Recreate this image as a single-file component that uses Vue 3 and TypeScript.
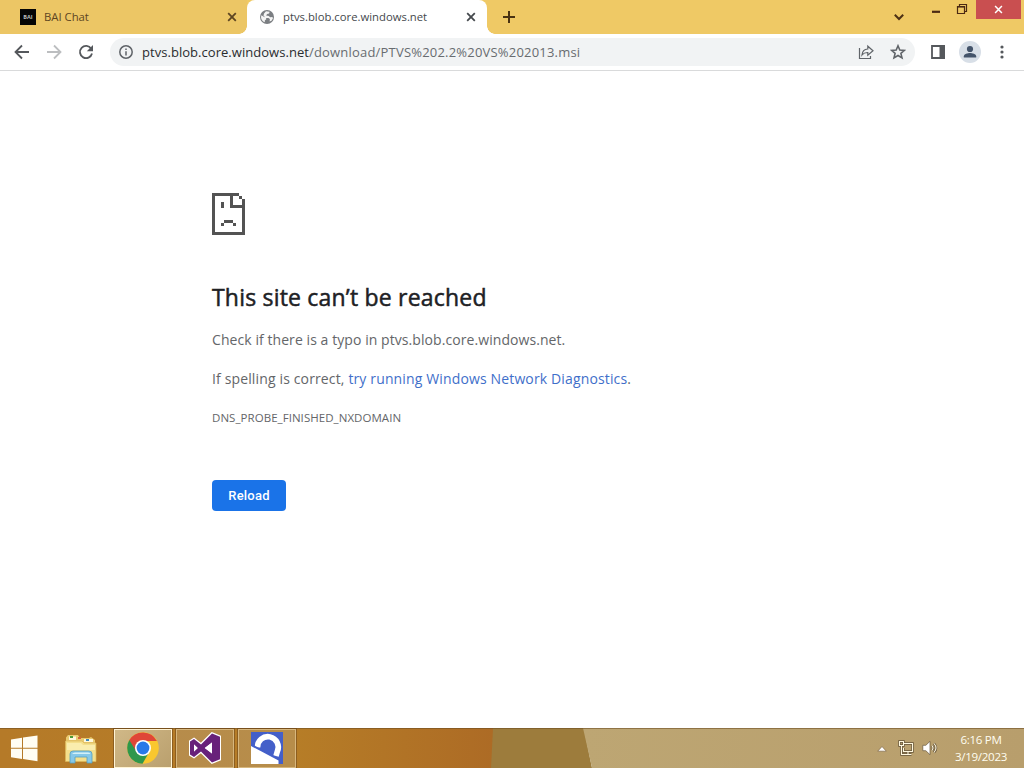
<template>
  <div class="desktop">
    <header class="tab-strip">
      <div class="tabs">
        <div
          v-for="tab in tabs"
          :key="tab.title"
          class="tab"
          :class="{ active: tab.active }"
        >
          <span v-if="!tab.active" class="bai-icon">BAI</span>
          <svg v-else class="globe" viewBox="0 0 16 16">
            <circle cx="8" cy="8" r="7" fill="#7b7e82" />
            <path d="M2.4 6.2 5.2 8l1.8.5.3 1.8-1.5 1.2v1.8C3.5 12.5 2 10.4 2 8zM7 2.3l3.6.5-.5 1.7-2 .4-1 1.7 2.6.3 1.5 1.3 2.3-.3.4 1.5-1.4 2.4-1.9.7.3-2.4-1.5-1-2.6-.3-2.3-2L5 4.5z" fill="#f4f4f4" />
          </svg>
          <span class="tab-title">{{ tab.title }}</span>
          <svg class="tab-close" viewBox="0 0 10 10">
            <path d="M1.2 1.2l7.6 7.6M8.8 1.2l-7.6 7.6" />
          </svg>
        </div>
      </div>
      <svg class="new-tab" viewBox="0 0 12 12"><path d="M6 0v12M0 6h12" /></svg>
      <svg class="tab-search" viewBox="0 0 10 8"><path d="M.8 1.8 5 6l4.2-4.2" /></svg>
      <div class="window-controls">
        <svg class="minimize" viewBox="0 0 10 12"><path d="M1 10.8h8" stroke-width="2.2" /></svg>
        <svg class="restore" viewBox="0 0 12 12">
          <path d="M3.5 3V1.5h7v7H9" />
          <path d="M1.5 3.5h7v7h-7z" /><path d="M1 4h8" />
        </svg>
        <div class="close-window">
          <svg viewBox="0 0 10 10"><path d="M1.2 1.2l7.6 7.6M8.8 1.2l-7.6 7.6" /></svg>
        </div>
      </div>
    </header>

    <nav class="toolbar">
      <svg class="nav-icon" viewBox="0 0 16 16"><path d="M15 8H2M8 1.5 1.5 8 8 14.5" /></svg>
      <svg class="nav-icon disabled" viewBox="0 0 16 16"><path d="M1 8h13M8 1.5 14.5 8 8 14.5" /></svg>
      <svg class="nav-icon" viewBox="0 0 16 16">
        <path d="M13.2 4.7A6.1 6.1 0 1 0 14 9.5" />
        <path d="M15 1v6.2H8.8z" class="solid" />
      </svg>
      <div class="omnibox">
        <svg class="info" viewBox="0 0 14 14">
          <circle cx="7" cy="7" r="6.2" /><path d="M7 6.2v4.3M7 3.4v1.6" />
        </svg>
        <span class="url"><b>ptvs.blob.core.windows.net</b>/download/PTVS%202.2%20VS%202013.msi</span>
        <svg class="share" viewBox="0 0 16 16">
          <path d="M1.5 4v10.5h11V12" />
          <path d="M4 11C4.3 7 6.5 5.2 9.8 5V2.2L15 6.8l-5.2 4.5V8.5C7.2 8.4 5.4 9.2 4 11z" />
        </svg>
        <svg class="star" viewBox="0 0 16 16">
          <path d="M8 1.8l1.8 4.2 4.6.4-3.5 3 1.1 4.5L8 11.5l-4 2.4 1.1-4.5-3.5-3L6.2 6z" />
        </svg>
      </div>
      <svg class="side-panel" viewBox="0 0 14 14">
        <path d="M1 1h12v12H1z" /><path d="M8.5 0H14v14H8.5z" class="solid" />
      </svg>
      <svg class="avatar" viewBox="0 0 22 22">
        <circle cx="11" cy="11" r="11" fill="#d8dfe7" />
        <circle cx="11" cy="8" r="3.1" fill="#44546a" />
        <path d="M4.8 16.5v-1.2c0-2.3 4-3.2 6.2-3.2s6.2.9 6.2 3.2v1.2z" fill="#44546a" />
      </svg>
      <svg class="menu" viewBox="0 0 4 14">
        <circle cx="2" cy="2" r="1.6" /><circle cx="2" cy="7" r="1.6" /><circle cx="2" cy="12" r="1.6" />
      </svg>
    </nav>

    <main class="page">
      <svg class="sad-page" viewBox="0 0 11 14" shape-rendering="crispEdges">
        <path d="M0 0h9v1h1v1h1v12H0zM1 1v12h9V5H6V1zM7 1v3h3V2H9V1z" fill-rule="evenodd" />
        <path d="M3 3h1v2H3zM4 9h3v1H4zM3 10h1v1H3zM7 10h1v1H7z" />
      </svg>
      <h1>This site can’t be reached</h1>
      <p class="check">Check if there is a typo in ptvs.blob.core.windows.net.</p>
      <p class="spelling">If spelling is correct, <a>try running Windows Network Diagnostics</a>.</p>
      <div class="error-code">DNS_PROBE_FINISHED_NXDOMAIN</div>
      <button class="reload">Reload</button>
    </main>

    <footer class="taskbar">
      <svg class="wallpaper" viewBox="0 0 1024 40" preserveAspectRatio="none">
        <defs>
          <linearGradient id="wood">
            <stop offset="0" stop-color="#b57a28" />
            <stop offset=".6" stop-color="#b67d27" />
            <stop offset="1" stop-color="#ad6b25" />
          </linearGradient>
          <linearGradient id="sand">
            <stop offset="0" stop-color="#bda673" />
            <stop offset="1" stop-color="#b89e6c" />
          </linearGradient>
        </defs>
        <rect width="493" height="40" fill="url(#wood)" />
        <path d="M493 0h91l8 40H491z" fill="#9d7c3c" />
        <path d="M583 0h441v40H592z" fill="url(#sand)" />
        <path d="M0 .5h1024" stroke="#694b20" stroke-opacity=".55" />
      </svg>

      <div class="start">
        <svg viewBox="0 0 28 27">
          <path d="M1 4.5 12 2.8v10H1zM13 2.6 27.5.5v12.3H13zM1 13.8h11v10.1L1 22.3zM13 13.8h14.5v12.5L13 24.1z" />
        </svg>
      </div>

      <div class="task explorer">
        <svg viewBox="0 0 34 32">
          <path d="M2 3.5 4 1h10l2 3h9l2-1 4 3v20H2z" fill="#e9ca70" />
          <path d="M5 2.5h7V6H5zM20 5h9v3h-9z" fill="#fff8dc" />
          <path d="M6 2h3v2H6z" fill="#4c9b39" /><path d="M14 3h3v2h-3z" fill="#d5643c" />
          <path d="M22 5h3v2h-3z" fill="#4189bc" />
          <path d="M1.5 7H18l2 2h12v18.5H1.5z" fill="#f4df8c" stroke="#dcb75a" stroke-width=".7" />
          <path d="M3 9h14l2 2h12v5H3z" fill="#faedae" />
          <path d="M6 29V20q0-3 3-3h16q3 0 3 3v9h-5v-6H11v6z" fill="#86c8e8" stroke="#579ebd" stroke-width=".8" />
          <path d="M8 20q1-1.5 3-1.5h13q2 0 2.5 1.5z" fill="#d3f0f7" />
        </svg>
      </div>

      <div class="task open current">
        <svg viewBox="0 0 32 32">
          <circle cx="16" cy="16" r="15.8" fill="#f9c72f" />
          <path d="M2.3 8.1A15.8 15.8 0 0 0 15.5 31.8L22.2 20 16 16z" fill="#2f974c" />
          <path d="M2.3 8.1 9.7 20 16 9h13.9A15.8 15.8 0 0 0 2.3 8.1z" fill="#df4638" />
          <circle cx="16" cy="16" r="8" fill="#fff" /><circle cx="16" cy="16" r="6.4" fill="#2979e8" />
        </svg>
      </div>

      <div class="task open studio">
        <svg viewBox="0 0 32 32">
          <path d="M1 9.5 5 7l7 5.5L23 1.5l8 3.3v22.4L23 30.5 12 19.5 5 25l-4-2.5zM5 12.5v7L8.7 16zM23 10.5 15.8 16l7.2 5.5z" class="mark" fill-rule="evenodd" />
          <path d="M5 12.5v7L8.7 16zM23 10.5 15.8 16l7.2 5.5z" fill="#fff" />
        </svg>
      </div>

      <div class="task open app">
        <svg viewBox="0 0 32 32">
          <path d="M0 0h32v32H0z" fill="#445fc9" />
          <path d="M6.5 15.500A10.400 10.400 0 1 1 26.300 19.500L25 24" fill="none" stroke="#fff" stroke-width="5.600" />
          <path d="M0 12.8 32 29.8" stroke="#445fc9" stroke-width="2" />
          <path d="M0 14 27.5 28.6V32H0z" fill="#fff" />
        </svg>
      </div>

      <div class="tray">
        <svg class="tray-arrow" viewBox="0 0 10 6"><path d="M5 .5 9.3 5.2H.7z" /></svg>
        <svg class="network" viewBox="0 0 16 16">
          <g class="halo"><path d="M6 3.5h8.5v8H5.5V8M10 12v2.5M6.5 14.5h7M1.5 1.5h4v4h-4zM3.5 6v8.5h3" /></g>
          <g class="line"><path d="M6 3.5h8.5v8H5.5V8M10 12v2.5M6.5 14.5h7M1.5 1.5h4v4h-4zM3.5 6v8.5h3" /></g>
        </svg>
        <svg class="volume" viewBox="0 0 16 16">
          <path d="M.8 5.3h3L8 1.3v13.4L3.8 10.7h-3z" fill="#fff" stroke="#65543a" stroke-width=".7" />
          <g class="halo"><path d="M10 5.7q2 2.3 0 4.6M12 3.5q4 4.5 0 9" /></g>
          <g class="line"><path d="M10 5.7q2 2.3 0 4.6M12 3.5q4 4.5 0 9" /></g>
        </svg>
        <div class="clock">
          <span class="time">6:16 PM</span>
          <span class="date">3/19/2023</span>
        </div>
      </div>
    </footer>
  </div>
</template>

<script setup lang="ts">
interface BrowserTab {
  title: string
  active: boolean
}

const tabs: BrowserTab[] = [
  { title: 'BAI Chat', active: false },
  { title: 'ptvs.blob.core.windows.net', active: true },
]
</script>

<style>
body {
  margin: 0;
  overflow: hidden;
}
</style>

<style scoped>
* {
  box-sizing: border-box;
}

.desktop {
  width: 1024px;
  height: 768px;
  display: flex;
  flex-direction: column;
  background: #fff;
  font-family: "Open Sans", "Noto Sans", sans-serif;
}

svg {
  display: block;
  flex: none;
}

.tab-strip {
  height: 34px;
  flex: none;
  display: flex;
  background: #efc965;
}

.tabs {
  display: flex;
  width: 487px;
}

.tab {
  display: flex;
  align-items: center;
  height: 34px;
  width: 247px;
  padding: 0 10px 0 20px;
  background: #ecc665;
  color: #5d4522;
  font-size: 11.3px;
}

.tab.active {
  position: relative;
  width: 240px;
  padding: 0 11px 0 12px;
  border-radius: 8px 8px 0 0;
  background: #fff;
  color: #45494d;
}

/* flared feet of the selected tab */
.tab.active::before,
.tab.active::after {
  content: '';
  position: absolute;
  bottom: 0;
  width: 8px;
  height: 8px;
}

.tab.active::before {
  left: -8px;
  background: radial-gradient(circle at 0 0, transparent 7.5px, #fff 8px);
}

.tab.active::after {
  right: -8px;
  background: radial-gradient(circle at 100% 0, transparent 7.5px, #fff 8px);
}

.bai-icon {
  width: 16px;
  height: 16px;
  background: #050505;
  color: #bdbdbd;
  font-size: 5.5px;
  font-weight: 700;
  line-height: 16px;
  text-align: center;
}

.globe {
  width: 16px;
  height: 16px;
}

.tab-title {
  flex: 1;
  margin-left: 8px;
  padding-bottom: 2px;
  white-space: nowrap;
}

.tab-close {
  width: 10px;
  height: 10px;
  fill: none;
  stroke: currentColor;
  stroke-width: 1.8;
}

.new-tab {
  width: 12px;
  height: 12px;
  margin: 11px 0 0 16px;
  stroke: #493212;
  stroke-width: 2;
}

.tab-search {
  width: 10px;
  height: 8px;
  margin: 13px 0 0 379px;
  fill: none;
  stroke: #4d3115;
  stroke-width: 2;
}

.window-controls {
  display: flex;
  flex: 1;
  margin-left: 27px;
}

.minimize {
  width: 10px;
  height: 12px;
  margin-top: 1px;
  stroke: #4b2913;
}

.restore {
  width: 12px;
  height: 12px;
  margin: 3px 0 0 15px;
  fill: none;
  stroke: #4b2913;
  stroke-width: 1.2;
}

.close-window {
  display: flex;
  justify-content: center;
  align-items: center;
  width: 45px;
  height: 19px;
  margin-left: 8px;
  background: #c94f50;
}

.close-window svg {
  width: 9px;
  height: 9px;
  stroke: #fff;
  stroke-width: 1.7;
}

.toolbar {
  display: flex;
  align-items: center;
  height: 37px;
  flex: none;
  padding: 0 19px 0 14px;
  border-bottom: 1px solid #d9dadb;
  background: #fff;
}

.nav-icon {
  width: 16px;
  height: 16px;
  margin-right: 16px;
  fill: none;
  stroke: #55585c;
  stroke-width: 1.8;
}

.nav-icon.disabled {
  stroke: #bcbec0;
}

.solid {
  fill: #55585c;
  stroke: none;
}

.omnibox {
  display: flex;
  align-items: center;
  width: 805px;
  height: 28px;
  padding: 0 9px;
  border-radius: 14px;
  background: #f1f3f4;
}

.info {
  width: 14px;
  height: 14px;
  fill: none;
  stroke: #5f6368;
  stroke-width: 1.5;
}

.url {
  flex: 1;
  margin-left: 9px;
  color: #686c70;
  font-size: 13px;
  letter-spacing: 0.2px;
  white-space: nowrap;
}

.url b {
  color: #2a2c2f;
  font-weight: 400;
  letter-spacing: 0.04px;
}

.share,
.star {
  width: 16px;
  height: 16px;
  margin-left: 16px;
  fill: none;
  stroke: #606469;
  stroke-width: 1.2;
}

.star {
  stroke-width: 1.6;
}

.side-panel {
  width: 14px;
  height: 14px;
  margin-left: 16px;
  fill: none;
  stroke: #55585c;
  stroke-width: 1.8;
}

.avatar {
  width: 22px;
  height: 22px;
  margin-left: 14px;
}

.menu {
  width: 4px;
  height: 14px;
  margin-left: 19px;
  fill: #55585c;
}

.page {
  flex: 1;
  padding: 122px 212px 0;
  color: #646669;
}

.sad-page {
  width: 33px;
  height: 42px;
  fill: #535353;
}

h1 {
  margin: 46px 0 0;
  color: #202124;
  font-size: 23px;
  font-weight: 500;
  line-height: 32px;
  letter-spacing: 0.2px;
  white-space: nowrap;
  -webkit-text-stroke: 0.5px #202124;
}

p {
  margin: 0;
  font-size: 14px;
  line-height: 22px;
  white-space: nowrap;
}

.check {
  margin-top: 16px;
  letter-spacing: 0.07px;
}

.spelling {
  margin-top: 17px;
  letter-spacing: 0.14px;
}

a {
  color: #3f6fca;
}

.error-code {
  margin-top: 19px;
  font-size: 11.5px;
  line-height: 18px;
  letter-spacing: 0.05px;
}

.reload {
  display: block;
  width: 74px;
  height: 31px;
  margin-top: 53px;
  padding: 0;
  border: 0;
  border-radius: 4px;
  background: #1a73e8;
  color: #fff;
  font-family: Roboto, sans-serif;
  font-size: 13px;
  font-weight: 500;
  letter-spacing: 0.2px;
}

.taskbar {
  position: relative;
  display: flex;
  height: 40px;
  flex: none;
}

.wallpaper {
  position: absolute;
  width: 1024px;
  height: 40px;
}

.taskbar > :not(.wallpaper) {
  position: relative;
}

.start {
  display: flex;
  align-items: center;
  width: 50px;
  padding-left: 10px;
}

.start svg {
  width: 28px;
  height: 27px;
  fill: #fffdf3;
}

.task {
  display: flex;
  align-items: center;
  justify-content: center;
  width: 58px;
  height: 39px;
  margin: 1px 4px 0 0;
  padding-bottom: 1px;
}

.task svg {
  width: 32px;
  height: 32px;
}

.explorer {
  width: 60px;
}

.explorer svg {
  width: 34px;
  margin: 4px 0 0 2px;
}

.open {
  border: 1px solid #d7b77e;
  background: rgba(183, 151, 98, 0.6);
  box-shadow: 0 0 0 1px rgba(99, 64, 24, 0.5);
}

.current {
  border-color: #fff3d3;
  background: linear-gradient(135deg, #d0b887, #baa06e);
}

.mark {
  fill: #68217a;
  stroke: #fff;
  stroke-width: 2.6;
  paint-order: stroke;
}

.tray {
  display: flex;
  align-items: center;
  margin-left: auto;
  padding-right: 13px;
}

.tray-arrow {
  width: 10px;
  height: 6px;
  margin: 2px 11px 0 0;
  fill: #fff;
  stroke: #80694a;
  stroke-width: 0.7;
}

.network,
.volume {
  width: 16px;
  height: 16px;
  margin-right: 8px;
}

.halo,
.line {
  fill: none;
}

.halo {
  stroke: #65543a;
  stroke-width: 2.5;
}

.line {
  stroke: #fff8df;
  stroke-width: 1.1;
}

.clock {
  display: flex;
  flex-direction: column;
  align-items: center;
  width: 60px;
  color: #fffdf0;
  font-size: 11.6px;
  line-height: 17px;
  letter-spacing: -0.3px;
  white-space: nowrap;
}

.volume {
  margin-right: 13px;
}
</style>
